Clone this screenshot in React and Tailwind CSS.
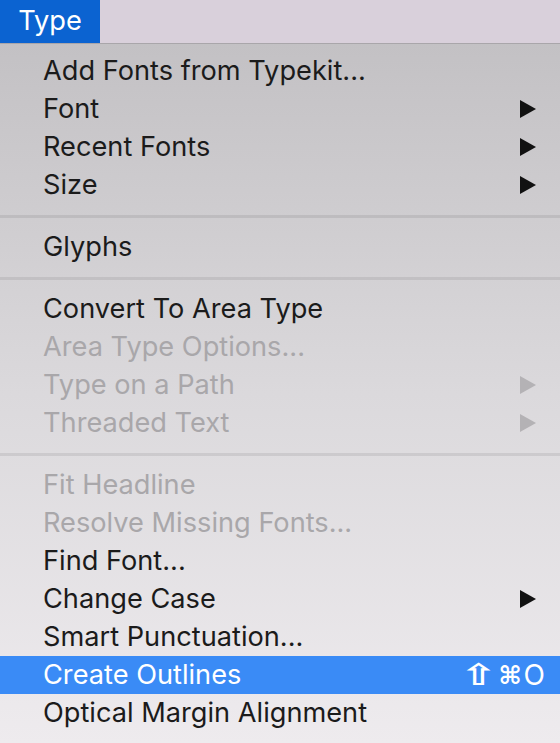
import React from 'react';

const sections = [
  [
    { label: 'Add Fonts from Typekit...' },
    { label: 'Font', sub: true },
    { label: 'Recent Fonts', sub: true },
    { label: 'Size', sub: true },
  ],
  [{ label: 'Glyphs' }],
  [
    { label: 'Convert To Area Type' },
    { label: 'Area Type Options...', disabled: true },
    { label: 'Type on a Path', sub: true, disabled: true },
    { label: 'Threaded Text', sub: true, disabled: true },
  ],
  [
    { label: 'Fit Headline', disabled: true },
    { label: 'Resolve Missing Fonts...', disabled: true },
    { label: 'Find Font...' },
    { label: 'Change Case', sub: true },
    { label: 'Smart Punctuation...' },
    { label: 'Create Outlines', active: true, shortcut: true },
    { label: 'Optical Margin Alignment' },
  ],
];

function Arrow({ className }) {
  return (
    <svg width="18" height="18" viewBox="0 0 18 18" className={className}>
      <polygon points="1,0 17,9 1,18" fill="currentColor" />
    </svg>
  );
}

function Item({ item }) {
  let tone = 'text-[#1b1b1b]';
  if (item.disabled) tone = 'text-[#a9a7aa]';
  if (item.active) tone = 'bg-[#3a8bf6] text-white';
  return (
    <div className={`flex h-[38px] items-center pl-[43px] ${item.shortcut ? 'pr-[15px]' : 'pr-[23px]'} ${tone}`}>
      <span className="flex-1 whitespace-nowrap">{item.label}</span>
      {item.sub && <Arrow className={item.disabled ? 'text-[#b4b2b5]' : 'text-[#111]'} />}
      {item.shortcut && (
        <span className="flex items-center gap-[2px] whitespace-nowrap leading-none">
          <span className="inline-block mx-[5px] scale-x-[1.5] font-['DejaVu_Sans',sans-serif] font-bold text-[30px]">⇧</span>
          <span className="font-['DejaVu_Sans',sans-serif] font-bold text-[25px]">⌘</span>
          <span className="text-[28px]">O</span>
        </span>
      )}
    </div>
  );
}

export default function App() {
  return (
    <div className="w-[560px] h-[743px] overflow-hidden font-['Inter',sans-serif] text-[27.2px]">
      <div className="flex h-[44px] border-b border-[#a9a6aa] bg-[#d9d0db]">
        <div className="flex w-[100px] items-center justify-center bg-[#0b63d1] text-white">Type</div>
      </div>
      <div className="h-[699px] bg-gradient-to-b from-[#c3c1c4] via-[#dbd9dc] to-[#eeebee] pt-[8px]">
        {sections.map((section, i) => (
          <div key={i}>
            {i > 0 && (
              <div className="pt-[11px] pb-[10px]">
                <div className="h-[3px] bg-black/[0.08]" />
              </div>
            )}
            {section.map((item) => (
              <Item key={item.label} item={item} />
            ))}
          </div>
        ))}
      </div>
    </div>
  );
}
